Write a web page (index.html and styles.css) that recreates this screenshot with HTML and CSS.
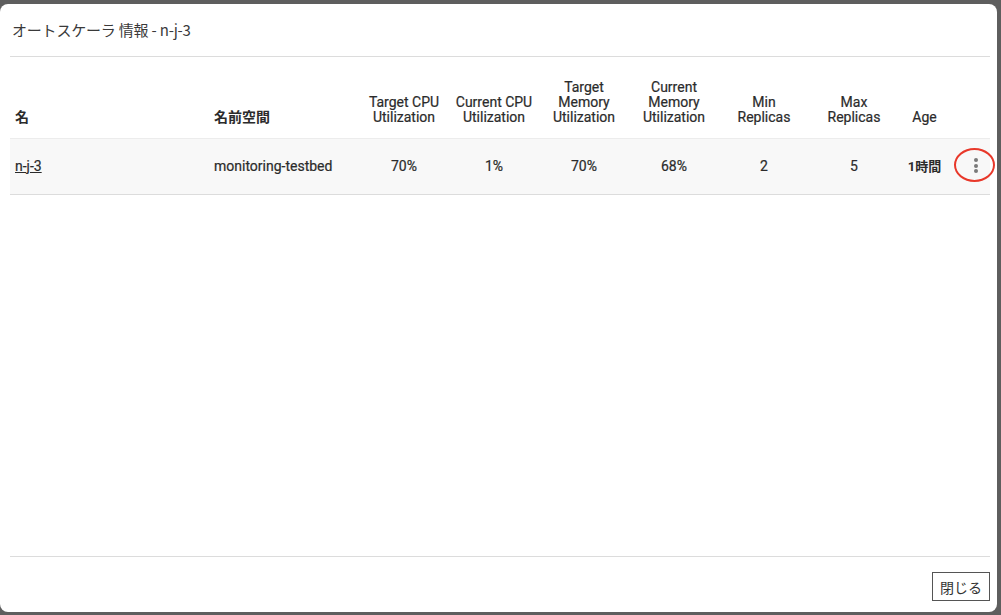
FILE: index.html
```html
<!DOCTYPE html>
<html lang="ja">
<head>
    <meta charset="UTF-8">
    <title>オートスケーラ 情報 - n-j-3</title>
    <link rel="stylesheet" href="styles.css">
</head>
<body>
    <div class="dialog">
        <div class="dialog-header">
            <h2 class="dialog-title">オートスケーラ 情報 - n-j-3</h2>
        </div>

        <div class="dialog-content">
            <table class="hpa-table">
                <colgroup>
                    <col class="col-name">
                    <col class="col-ns">
                    <col class="col-num">
                    <col class="col-num">
                    <col class="col-num">
                    <col class="col-num">
                    <col class="col-num">
                    <col class="col-num">
                    <col class="col-age">
                    <col class="col-action">
                </colgroup>
                <thead>
                    <tr>
                        <th class="left">名</th>
                        <th class="left">名前空間</th>
                        <th>Target CPU<br>Utilization</th>
                        <th>Current CPU<br>Utilization</th>
                        <th>Target<br>Memory<br>Utilization</th>
                        <th>Current<br>Memory<br>Utilization</th>
                        <th>Min<br>Replicas</th>
                        <th>Max<br>Replicas</th>
                        <th>Age</th>
                        <th></th>
                    </tr>
                </thead>
                <tbody>
                    <tr>
                        <td class="left"><a href="#" class="name-link">n-j-3</a></td>
                        <td class="left">monitoring-testbed</td>
                        <td>70%</td>
                        <td>1%</td>
                        <td>70%</td>
                        <td>68%</td>
                        <td>2</td>
                        <td>5</td>
                        <td class="age">1時間</td>
                        <td class="action-cell">
                            <button class="menu-btn" type="button" aria-label="メニュー">
                                <span class="dot"></span>
                                <span class="dot"></span>
                                <span class="dot"></span>
                            </button>
                            <span class="highlight-ring"></span>
                        </td>
                    </tr>
                </tbody>
            </table>
        </div>

        <div class="dialog-footer">
            <button class="close-btn" type="button">閉じる</button>
        </div>
    </div>
</body>
</html>
```

FILE: styles.css
```css
:root {
    --backdrop-color: #5e5e5e;
    --dialog-bg: #fff;
    --text-color: #2b2b2b;
    --divider-color: #dcdcdc;
    --row-bg: #f8f8f8;
    --row-top-border: #ececec;
    --dot-color: #7a7a7a;
    --ring-color: #e8382a;
}
html, body {
    margin: 0;
    height: 100%;
}
body {
    font-family: Roboto, "Noto Sans CJK JP", sans-serif;
    background-color: var(--backdrop-color);
    color: var(--text-color);
    padding-top: 4px;
    box-sizing: border-box;
}
.dialog {
    background-color: var(--dialog-bg);
    width: 997px;
    height: 608px;
    border-radius: 8px;
    display: flex;
    flex-direction: column;
    overflow: hidden;
}

/* header */
.dialog-header {
    margin: 0 7px 0 10px;
    height: 53px;
    border-bottom: 1px solid var(--divider-color);
    display: flex;
    align-items: center;
    padding-left: 2px;
    padding-bottom: 2px;
    box-sizing: border-box;
}
.dialog-title {
    margin: 0;
    font-family: "Noto Sans CJK JP", Roboto, sans-serif;
    font-size: 15px;
    font-weight: 400;
    color: #3a3a3a;
    letter-spacing: -0.2px;
}

/* table */
.dialog-content {
    flex: 1;
    margin: 0 7px 0 10px;
    border-bottom: 1px solid var(--divider-color);
}
.hpa-table {
    width: 980px;
    border-collapse: collapse;
    table-layout: fixed;
    font-size: 14px;
}
.col-name { width: 199px; }
.col-ns { width: 150px; }
.col-num { width: 90px; }
.col-age { width: 51px; }
.col-action { width: 40px; }

.hpa-table th {
    height: 81px;
    box-sizing: border-box;
    vertical-align: bottom;
    padding: 0 0 13px;
    font-weight: 400;
    line-height: 15px;
    text-align: center;
    color: var(--text-color);
    -webkit-text-stroke: 0.2px var(--text-color);
}
.hpa-table th.left {
    font-weight: 700;
    -webkit-text-stroke: 0;
}
.hpa-table td {
    height: 54px;
    padding: 0 0 1px;
    text-align: center;
    font-weight: 400;
    background-color: var(--row-bg);
    border-top: 1px solid var(--row-top-border);
    border-bottom: 1px solid var(--divider-color);
    color: var(--text-color);
    -webkit-text-stroke: 0.2px var(--text-color);
}
.hpa-table td.age {
    font-weight: 700;
    -webkit-text-stroke: 0;
    font-size: 13px;
}
.hpa-table .left {
    text-align: left;
    padding-left: 5px;
}
.name-link {
    color: var(--text-color);
    text-decoration: underline;
}

/* row menu */
.action-cell {
    position: relative;
}
.menu-btn {
    border: none;
    background: none;
    padding: 0;
    margin-left: 24px;
    display: flex;
    flex-direction: column;
    gap: 1.5px;
    cursor: pointer;
}
.dot {
    width: 4px;
    height: 4px;
    border-radius: 50%;
    background-color: var(--dot-color);
}
.highlight-ring {
    position: absolute;
    left: 4px;
    top: 9px;
    width: 37px;
    height: 30px;
    border: 2.5px solid var(--ring-color);
    border-radius: 50%;
    pointer-events: none;
}

/* footer */
.dialog-footer {
    margin: 0 7px 0 10px;
    height: 55px;
    display: flex;
    justify-content: flex-end;
    align-items: flex-start;
    padding-top: 15px;
    box-sizing: border-box;
}
.close-btn {
    font-family: "Noto Sans CJK JP", sans-serif;
    font-size: 14px;
    color: #333;
    background-color: #fff;
    border: 1px solid #555;
    height: 29px;
    padding: 0 7px;
    cursor: pointer;
}
```
